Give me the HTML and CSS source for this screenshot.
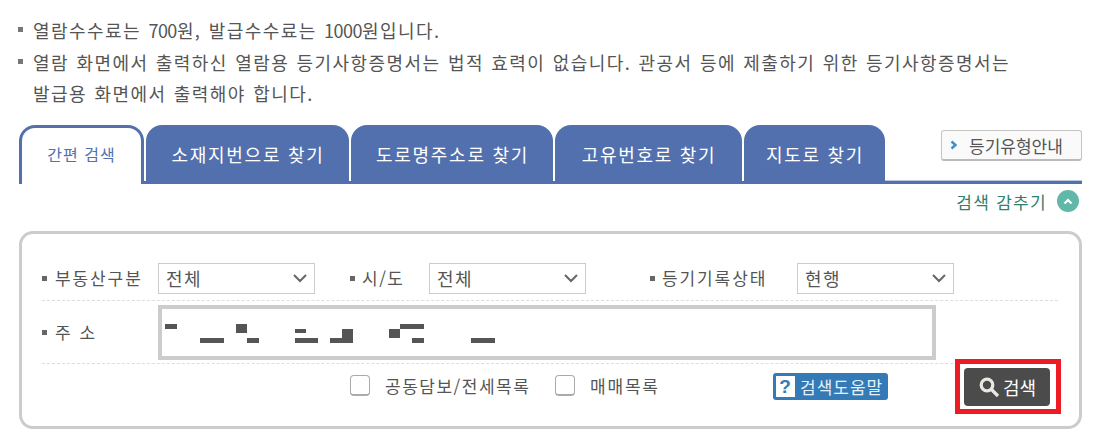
FILE: index.html
```html
<!DOCTYPE html>
<html lang="ko">
<head>
    <meta charset="UTF-8">
    <title>등기열람 검색</title>
    <link rel="stylesheet" href="styles.css">
</head>
<body>
    <div class="wrap">
        <ul class="notice">
            <li>열람수수료는 <span class="num">700</span>원, 발급수수료는 <span class="num">1000</span>원입니다.</li>
            <li>열람 화면에서 출력하신 열람용 등기사항증명서는 법적 효력이 없습니다. 관공서 등에 제출하기 위한 등기사항증명서는<br>발급용 화면에서 출력해야 합니다.</li>
        </ul>

        <div class="tabs">
            <a class="tab tab-on">간편 검색</a>
            <a class="tab tab-2">소재지번으로 찾기</a>
            <a class="tab tab-3">도로명주소로 찾기</a>
            <a class="tab tab-4">고유번호로 찾기</a>
            <a class="tab tab-5">지도로 찾기</a>
            <a class="guide-btn">
                <svg width="8" height="10" viewBox="0 0 8 10"><path d="M1.5 1.5L5.5 5l-4 3.5" fill="none" stroke="#3d8fc9" stroke-width="2.4"/></svg>
                등기유형안내
            </a>
        </div>

        <div class="toggle">
            <span>검색 감추기</span>
            <span class="toggle-ico">
                <svg width="10" height="7" viewBox="0 0 10 7"><path d="M1.5 5.5L5 2l3.5 3.5" fill="none" stroke="#fff" stroke-width="2.2"/></svg>
            </span>
        </div>

        <div class="search-box">
            <div class="row row-top">
                <label class="lbl lbl-kind">부동산구분</label>
                <div class="select"><span>전체</span>
                    <svg width="14" height="9" viewBox="0 0 14 9"><path d="M1 1l6 6 6-6" fill="none" stroke="#666" stroke-width="2"/></svg>
                </div>
                <label class="lbl lbl-city">시/도</label>
                <div class="select"><span>전체</span>
                    <svg width="14" height="9" viewBox="0 0 14 9"><path d="M1 1l6 6 6-6" fill="none" stroke="#666" stroke-width="2"/></svg>
                </div>
                <label class="lbl lbl-state">등기기록상태</label>
                <div class="select"><span>현행</span>
                    <svg width="14" height="9" viewBox="0 0 14 9"><path d="M1 1l6 6 6-6" fill="none" stroke="#666" stroke-width="2"/></svg>
                </div>
            </div>

            <div class="row row-addr">
                <label class="lbl lbl-kind lbl-addr">주 소</label>
                <div class="addr-input">
                    <!-- 가려진 주소 -->
                    <svg width="770" height="47" viewBox="0 0 770 47" fill="#555">
                        <rect x="3" y="15" width="12" height="5"/>
                        <rect x="38" y="29" width="24" height="5"/>
                        <rect x="74" y="15" width="11" height="9"/>
                        <rect x="85" y="29" width="12" height="5"/>
                        <rect x="133" y="20" width="11" height="4"/>
                        <rect x="133" y="29" width="23" height="5"/>
                        <rect x="168" y="29" width="23" height="5"/>
                        <rect x="180" y="20" width="11" height="9"/>
                        <rect x="227" y="20" width="11" height="9"/>
                        <rect x="238" y="15" width="24" height="5"/>
                        <rect x="250" y="29" width="12" height="5"/>
                        <rect x="309" y="29" width="24" height="5"/>
                    </svg>
                </div>
            </div>

            <div class="row row-opts">
                <span class="check"></span>
                <span class="check-txt check-txt-1">공동담보/전세목록</span>
                <span class="check"></span>
                <span class="check-txt check-txt-2">매매목록</span>
                <a class="help-btn">
                    <span class="help-q">?</span>검색도움말
                </a>
                <button class="search-btn">
                    <svg width="22" height="22" viewBox="0 0 22 22"><circle cx="9" cy="9" r="5.8" fill="none" stroke="#e9e9e4" stroke-width="3.2"/><path d="M13.5 13.5L20 20" stroke="#e9e9e4" stroke-width="3.2"/></svg>
                    검색
                </button>
            </div>
        </div>
    </div>
</body>
</html>
```

FILE: styles.css
```css
html, body {
    margin: 0;
    padding: 0;
    background: #fff;
}
body {
    font-family: "Noto Sans CJK KR", "Noto Sans", sans-serif;
    font-size: 17px;
    color: #555;
}
.wrap {
    width: 1063px;
    margin-left: 19px;
}

.notice {
    list-style: none;
    margin: 0;
    padding: 15px 0 0 14px;
    font-size: 18px;
    line-height: 31.5px;
    letter-spacing: 1.44px;
    word-spacing: 0.9px;
    white-space: nowrap;
}
.notice li {
    position: relative;
}
.notice li::before {
    content: "";
    position: absolute;
    left: -15px;
    top: 12px;
    width: 5px;
    height: 5px;
    background: #777;
}
.num {
    letter-spacing: -0.5px;
}

.tabs {
    position: relative;
    display: flex;
    align-items: flex-start;
    gap: 2px;
    height: 59px;
    margin-top: 15.5px;
    border-bottom: 3px solid #5370ae;
    box-sizing: border-box;
}
/* 탭 오른쪽 연한 선 */
.tabs::after {
    content: "";
    position: absolute;
    right: 0;
    bottom: 0;
    width: 197px;
    height: 1px;
    background: #bcc8e0;
}
.tab {
    box-sizing: border-box;
    height: 59px;
    padding: 16px 0 0 1px;
    text-align: center;
    font-size: 18px;
    line-height: 26px;
    letter-spacing: 1.7px;
    color: #fff;
    background: #5370ae;
    border-radius: 16px 16px 0 0;
}
.tab-on {
    width: 125px;
    padding: 13px 0 0;
    font-size: 16px;
    letter-spacing: 1px;
    color: #5370ae;
    background: #fff;
    border: 3px solid #5370ae;
    border-bottom: none;
}
.tab-2 { width: 203px; }
.tab-3 { width: 202px; }
.tab-4 { width: 187px; }
.tab-5 { width: 141px; }

.guide-btn {
    display: flex;
    align-items: center;
    gap: 11px;
    box-sizing: border-box;
    width: 141px;
    height: 31px;
    margin: 5px 0 0 auto;
    padding-left: 8px;
    font-size: 17px;
    letter-spacing: 0;
    color: #555;
    background: #fafafa;
    border: 1px solid #c4c4c4;
    border-bottom: 2px solid #bbb;
    border-radius: 3px;
}

.toggle {
    display: flex;
    justify-content: flex-end;
    align-items: center;
    gap: 10px;
    height: 36px;
    padding: 0 3px 2px 0;
    box-sizing: border-box;
    font-size: 17px;
    letter-spacing: 1.3px;
    color: #2f7f6c;
}
.toggle-ico {
    display: flex;
    justify-content: center;
    align-items: center;
    width: 22px;
    height: 22px;
    border-radius: 50%;
    background: #62b8a8;
}

.search-box {
    box-sizing: border-box;
    height: 198px;
    margin-top: 11px;
    padding: 29px 21px 0 20px;
    border: 3px solid #ccc;
    border-radius: 14px;
}
.row {
    display: flex;
    align-items: center;
}
.row-top {
    padding-bottom: 6px;
    border-bottom: 1px dashed #ddd;
}
.row-addr {
    padding: 4px 0 3px;
    border-bottom: 1px dashed #ddd;
}
.row-opts {
    padding-top: 4px;
}

.lbl {
    position: relative;
    box-sizing: border-box;
    padding: 0 0 2px 13px;
    font-size: 17px;
    letter-spacing: 1.9px;
    line-height: 26px;
}
.lbl::before {
    content: "";
    position: absolute;
    left: 0;
    top: 11px;
    width: 5px;
    height: 5px;
    background: #666;
}
.lbl-kind { width: 116px; }
.lbl-city { width: 79px; margin-left: 35px; padding-left: 12px; letter-spacing: 1.5px; }
.lbl-state { width: 147px; margin-left: 64px; padding-left: 12px; }
.lbl-addr { letter-spacing: 2px; }

.select {
    display: flex;
    justify-content: space-between;
    align-items: center;
    box-sizing: border-box;
    width: 157px;
    height: 31px;
    padding: 0 7px 0 7px;
    font-size: 18px;
    letter-spacing: 1.4px;
    color: #555;
    border: 1px solid #ccc;
}
.select span {
    margin-top: -2px;
}

.addr-input {
    box-sizing: border-box;
    width: 778px;
    height: 55px;
    border: 4px solid #ccc;
    background: #fff;
}
.addr-input svg {
    display: block;
}

.check {
    box-sizing: border-box;
    width: 20px;
    height: 21px;
    margin-bottom: 3px;
    border: 1px solid #aaa;
    border-bottom-width: 2px;
    border-radius: 4px;
    background: #fff;
}
.check:first-child {
    margin-left: 308px;
}
.check-txt {
    margin: 0 0 3px 15px;
    font-size: 17px;
    letter-spacing: 1.5px;
    line-height: 24px;
    white-space: nowrap;
}
.check-txt-1 {
    width: 144px;
    margin-right: 26px;
}
.check-txt-2 {
    width: 70px;
    letter-spacing: 1.8px;
}

.help-btn {
    display: flex;
    align-items: center;
    box-sizing: border-box;
    width: 115px;
    height: 27px;
    margin: 0 0 1px 113px;
    padding-left: 3px;
    font-size: 17px;
    letter-spacing: 1px;
    color: #e6f0f8;
    background: #337ab7;
    border-radius: 3px;
}
.help-q {
    width: 19px;
    height: 21px;
    margin-right: 5px;
    text-align: center;
    font-family: "Liberation Sans", sans-serif;
    font-size: 19px;
    font-weight: 700;
    line-height: 21px;
    color: #337ab7;
    background: #fff;
}

.search-btn {
    position: relative;
    display: flex;
    justify-content: center;
    align-items: center;
    gap: 3px;
    box-sizing: border-box;
    width: 86px;
    height: 38px;
    margin-left: auto;
    margin-right: 8px;
    padding: 0;
    font-family: inherit;
    font-size: 18px;
    color: #fff;
    background: #4b4b4b;
    border: none;
    border-radius: 4px;
}
/* 빨간 표시 */
.search-btn::after {
    content: "";
    position: absolute;
    left: -9px;
    top: -9px;
    width: 106px;
    height: 55px;
    box-sizing: border-box;
    border: 5px solid #ed1c24;
}
```
